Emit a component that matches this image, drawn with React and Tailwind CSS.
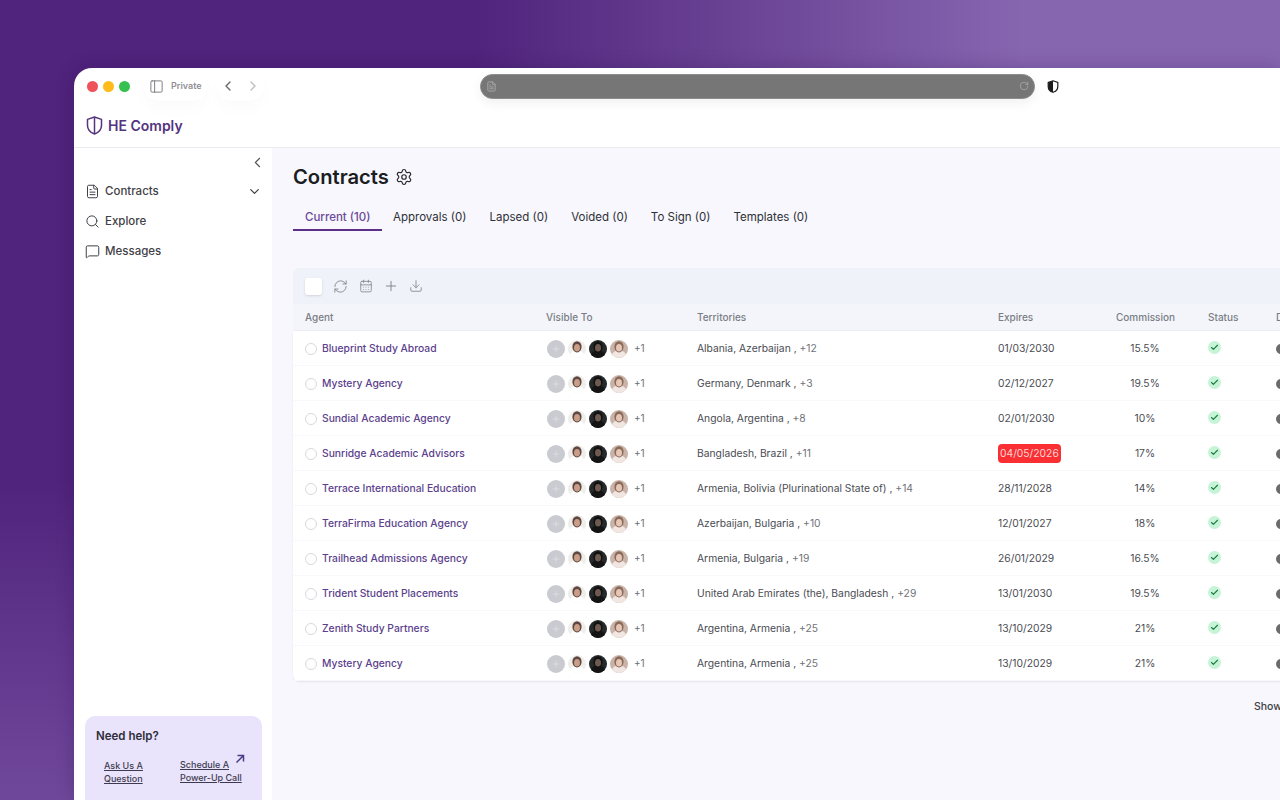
import React from "react";
import {
  CalendarDays,
  Check,
  ChevronDown,
  ChevronLeft,
  ChevronRight,
  Download,
  FileText,
  MessageSquare,
  PanelLeft,
  Plus,
  RefreshCw,
  RotateCw,
  Search,
  Settings,
} from "lucide-react";

const contracts = [
  { agent: "Blueprint Study Abroad", territories: "Albania, Azerbaijan", more: "+12", expires: "01/03/2030", commission: "15.5%" },
  { agent: "Mystery Agency", territories: "Germany, Denmark", more: "+3", expires: "02/12/2027", commission: "19.5%" },
  { agent: "Sundial Academic Agency", territories: "Angola, Argentina", more: "+8", expires: "02/01/2030", commission: "10%" },
  { agent: "Sunridge Academic Advisors", territories: "Bangladesh, Brazil", more: "+11", expires: "04/05/2026", commission: "17%", overdue: true },
  { agent: "Terrace International Education", territories: "Armenia, Bolivia (Plurinational State of)", more: "+14", expires: "28/11/2028", commission: "14%" },
  { agent: "TerraFirma Education Agency", territories: "Azerbaijan, Bulgaria", more: "+10", expires: "12/01/2027", commission: "18%" },
  { agent: "Trailhead Admissions Agency", territories: "Armenia, Bulgaria", more: "+19", expires: "26/01/2029", commission: "16.5%" },
  { agent: "Trident Student Placements", territories: "United Arab Emirates (the), Bangladesh", more: "+29", expires: "13/01/2030", commission: "19.5%" },
  { agent: "Zenith Study Partners", territories: "Argentina, Armenia", more: "+25", expires: "13/10/2029", commission: "21%" },
  { agent: "Mystery Agency", territories: "Argentina, Armenia", more: "+25", expires: "13/10/2029", commission: "21%" },
];

const tabs = ["Current (10)", "Approvals (0)", "Lapsed (0)", "Voided (0)", "To Sign (0)", "Templates (0)"];

const rowGrid = "grid grid-cols-[241px_151px_301px_118px_92px_68px_100px] pl-3 items-center";

const Avatar = ({ bg, hair, skin, shirt }) => (
  <svg width="18" height="18" viewBox="0 0 18 18" className="rounded-full shrink-0">
    <rect width="18" height="18" fill={bg} />
    <path d="M1 18c1-6 4-7.500 8-7.500s7 1.500 8 7.500z" fill={shirt} />
    <ellipse cx="9" cy="6.800" rx="4.600" ry="5.600" fill={hair} />
    <ellipse cx="9" cy="7.800" rx="3" ry="3.800" fill={skin} />
  </svg>
);

const VisibleTo = () => (
  <div className="flex items-center gap-[3px] ml-[1px]">
    <div className="w-[18px] h-[18px] rounded-full bg-[#c9cbd1] flex items-center justify-center">
      <Plus size={10} className="text-[#dfe0e4]" />
    </div>
    <Avatar bg="#efeeea" hair="#5d4740" skin="#c99d88" shirt="#ffffff" />
    <Avatar bg="#26292a" hair="#111111" skin="#6e5a50" shirt="#141414" />
    <Avatar bg="#c9b3a8" hair="#8a6a58" skin="#e6c6b6" shirt="#f1e6e2" />
    <span className="text-[10px] text-[#6b6f76] ml-[3px]">+1</span>
  </div>
);

const NavItem = ({ icon: Icon, label, chevron }) => (
  <div className="h-[30px] flex items-center text-[#3f4147]">
    <Icon size={15} strokeWidth={1.6} className="mr-[4px] w-[15px]" />
    <span className="text-[11.5px] font-medium ml-[1px] pt-[2px]">{label}</span>
    {chevron && <ChevronDown size={15} className="ml-auto" />}
  </div>
);

const App = () => {
  return (
    <div className="h-screen w-full overflow-hidden pl-[74px] pt-[68px] bg-[linear-gradient(to_right,rgba(135,102,176,0)_37%,rgba(135,102,176,1)_80%),linear-gradient(to_bottom,#50237c_60%,#70489b_100%)] [font-family:Inter,'Noto_Sans',sans-serif]">
      <div className="w-[1206px] h-[732px] bg-white rounded-tl-[18px] flex flex-col overflow-hidden shadow-[0_0_18px_rgba(40,10,70,0.25)]">
        {/* browser toolbar */}
        <div className="h-[36px] shrink-0 flex items-center pl-[13px]">
          <div className="flex gap-[5px]">
            <span className="w-[11px] h-[11px] rounded-full bg-[#f0525a]" />
            <span className="w-[11px] h-[11px] rounded-full bg-[#fdbc1c]" />
            <span className="w-[11px] h-[11px] rounded-full bg-[#35c04f]" />
          </div>
          <div className="flex items-center ml-[14px] h-[30px] px-[5px] rounded-full shadow-[0_8px_16px_rgba(0,0,0,0.02)]">
            <PanelLeft size={15} strokeWidth={1.5} className="text-[#77797d]" />
            <span className="ml-[7px] text-[9px] font-semibold text-[#8f9094]">Private</span>
          </div>
          <div className="flex items-center gap-[9px] ml-[10px] h-[30px] px-[3px] rounded-full shadow-[0_8px_16px_rgba(0,0,0,0.02)]">
            <ChevronLeft size={16} strokeWidth={2} className="text-[#66686c]" />
            <ChevronRight size={16} strokeWidth={2} className="text-[#bcbdc0]" />
          </div>
          <div className="ml-[216px] w-[555px] h-[25px] rounded-full bg-[#767676] border border-[#8c8c8c] flex items-center justify-between px-[5px] shadow-[0_4px_12px_rgba(0,0,0,0.06)]">
            <FileText size={11} className="text-[#a8a8a8]" />
            <RotateCw size={10} className="text-[#a8a8a8]" />
          </div>
          <svg width="12" height="13" viewBox="0 0 12 13" className="ml-[12px]">
            <path d="M6 .8 10.800 2.400v4c0 3-2.200 5-4.800 5.900C3.400 11.400 1.200 9.400 1.200 6.400v-4z" fill="#fff" stroke="#1c1c1c" strokeWidth="1.200" />
            <path d="M6 .8v11.500C3.400 11.400 1.200 9.400 1.200 6.400v-4z" fill="#1c1c1c" />
          </svg>
        </div>

        {/* logo row */}
        <div className="h-[44px] shrink-0 border-b border-[#eceaf1] flex items-center pl-[12px]">
          <svg width="17" height="19" viewBox="0 0 17 19" fill="none" stroke="#54347f" strokeWidth="1.500" strokeLinejoin="round">
            <path d="M8.500 1 15.500 3.400v6c0 4.200-3 7-7 8.600-4-1.600-7-4.400-7-8.600v-6z" />
            <path d="M8.500 1v17" />
          </svg>
          <span className="ml-[5px] text-[14px] font-semibold text-[#54347f]">HE Comply</span>
        </div>

        <div className="flex-1 flex min-h-0">
          {/* sidebar */}
          <aside className="w-[198px] shrink-0 flex flex-col pl-[11px] pr-[10px]">
            <div className="flex justify-end h-[28px] items-center pt-[1px]">
              <ChevronLeft size={17} strokeWidth={1.6} className="text-[#55575c] mr-[-4px]" />
            </div>
            <NavItem icon={FileText} label="Contracts" chevron />
            <NavItem icon={Search} label="Explore" />
            <NavItem icon={MessageSquare} label="Messages" />
            <div className="mt-auto h-[84px] bg-[#e9e3fb] rounded-t-[10px] px-[11px] pt-[12px]">
              <div className="text-[11.5px] font-semibold text-[#2f2d3a]">Need help?</div>
              <div className="flex mt-[13px] text-[9px] font-medium leading-[13px] text-[#3e3b50] underline">
                <div className="w-[84px] pl-[8px] pt-[1px]">
                  Ask Us A<br />Question
                </div>
                <div className="relative">
                  Schedule A<br />Power-Up Call
                  <svg width="10" height="10" viewBox="0 0 10 10" fill="none" stroke="#4b3a86" strokeWidth="1.500" className="absolute -top-[4px] left-[55px]">
                    <path d="M1.500 8.500 8.500 1.500M2.500 1.500h6v6" />
                  </svg>
                </div>
              </div>
            </div>
          </aside>

          {/* main */}
          <main className="flex-1 min-w-0 bg-[#f7f7fd] pl-[21px] pt-[16px]">
            <div className="flex items-center gap-[6px] h-[26px]">
              <h1 className="text-[20.2px] font-semibold text-[#1c1d22]">Contracts</h1>
              <Settings size={18} strokeWidth={1.6} className="text-[#2c2d32]" />
            </div>

            <div className="flex mt-[15px] h-[26px] text-[11.5px] text-[#2e3036]">
              {tabs.map((tab, i) => (
                <div
                  key={tab}
                  className={
                    i === 0
                      ? "pl-[12px] pr-[11px] pt-[2px] mr-[11.5px] flex items-center font-medium text-[#6a4a98] border-b-2 border-[#5b3089]"
                      : "mr-[23px] pt-[2px] flex items-center border-b-2 border-transparent"
                  }
                >
                  {tab}
                </div>
              ))}
            </div>

            <div className="mt-[37px] w-[1040px]">
              {/* table toolbar */}
              <div className="h-[36px] bg-[#f0f2f9] rounded-t-[6px] flex items-center pl-[12px] text-[#80828a]">
                <div className="w-[17px] h-[17px] bg-white rounded-[3px] shadow-sm" />
                <RefreshCw size={15} strokeWidth={1.4} className="ml-[11px]" />
                <CalendarDays size={14} strokeWidth={1.4} className="ml-[11px]" />
                <Plus size={16} strokeWidth={1.4} className="ml-[10px]" />
                <Download size={14} strokeWidth={1.4} className="ml-[10px]" />
              </div>
              {/* column headers */}
              <div className={`${rowGrid} h-[27px] bg-[#f3f5fa] text-[10px] font-medium text-[#7a7d85] border-b border-[#eceef4]`}>
                <span>Agent</span>
                <span>Visible To</span>
                <span>Territories</span>
                <span>Expires</span>
                <span>Commission</span>
                <span>Status</span>
                <span className="w-[4px] overflow-hidden">D</span>
              </div>
              {/* rows */}
              <div className="bg-white rounded-b-[6px] shadow-[0_1px_2px_rgba(0,0,0,0.08)]">
                {contracts.map((c, i) => (
                  <div key={i} className={`${rowGrid} h-[35px] pt-[1px] border-b border-[#f8f8fa] text-[10.3px] text-[#4a4c52]`}>
                    <div className="flex items-center">
                      <span className="w-[12px] h-[12px] rounded-full border border-[#d8d9dd] mr-[5px]" />
                      <span className="font-medium text-[#5c3f8d]">{c.agent}</span>
                    </div>
                    <VisibleTo />
                    <div>
                      {c.territories} , <span className="text-[#6f7278]">{c.more}</span>
                    </div>
                    <div>
                      {c.overdue ? (
                        <span className="inline-block px-[2px] py-[2px] rounded-[4px] bg-[#f92f33] text-[#ffd6d6]">{c.expires}</span>
                      ) : (
                        c.expires
                      )}
                    </div>
                    <div className="w-[58px] text-center">{c.commission}</div>
                    <div className="pb-[2px]">
                      <span className="w-[13px] h-[13px] rounded-full bg-[#c6f4d6] flex items-center justify-center">
                        <Check size={9} strokeWidth={3} className="text-[#1f7a46]" />
                      </span>
                    </div>
                    <div className="w-[12px] h-[10px] rounded-full bg-[#6b6b6e]" />
                  </div>
                ))}
              </div>
              <div className="mt-[18px] pl-[961px] text-[10.5px] font-medium text-[#3e4046]">Show</div>
            </div>
          </main>
        </div>
      </div>
    </div>
  );
};

export default App;
